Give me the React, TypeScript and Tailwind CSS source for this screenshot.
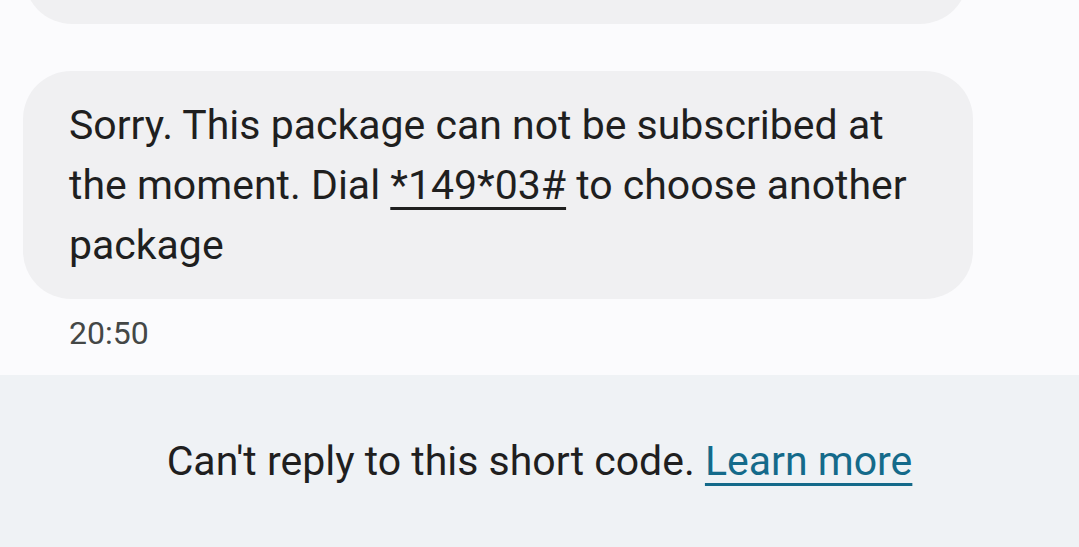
export default function App() {
  return (
    <div
      className="flex h-[547px] w-[1079px] flex-col overflow-hidden bg-[#fbfbfd] text-[#1f1f1f]"
      style={{ fontFamily: "Roboto, 'Noto Sans', sans-serif" }}
    >
      {/* tail of the previous message */}
      <div className="ml-[24px] mt-[-76px] h-[100px] w-[944px] shrink-0 rounded-[48px] bg-[#f0f0f2]" />

      <div className="ml-[23px] mt-[47px] w-[950px] shrink-0 rounded-[48px] bg-[#f0f0f2] py-[24px] pl-[46px] pr-[40px] text-[41px] leading-[60px]">
        Sorry. This package can not be subscribed at the moment. Dial{" "}
        <span className="underline decoration-[3px] underline-offset-[8px]">*149*03#</span> to choose another
        package
      </div>

      <div className="ml-[69px] mt-[14px] text-[32px] leading-[40px] text-[#444746]">20:50</div>

      <div className="mt-auto flex h-[172px] shrink-0 items-center justify-center bg-[#eff2f5] pt-[2px] text-[41px]">
        <span>
          Can't reply to this short code.{" "}
          <span className="text-[#146a8a] underline decoration-[3px] underline-offset-[8px]">Learn more</span>
        </span>
      </div>
    </div>
  );
}
